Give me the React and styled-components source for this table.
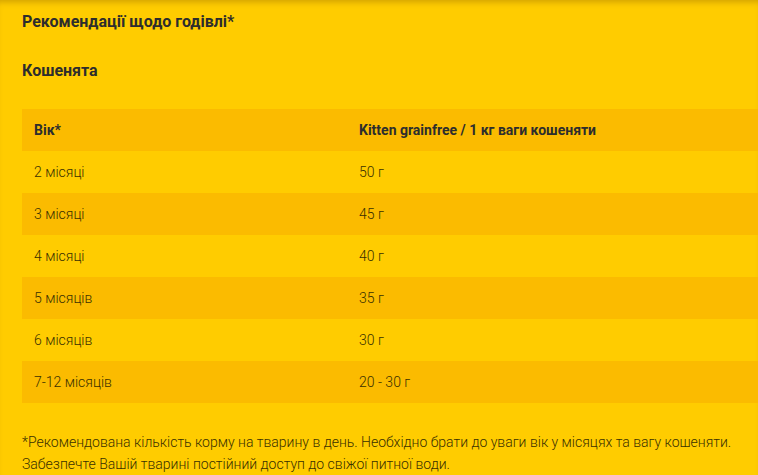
import React from 'react'
import styled, { createGlobalStyle } from 'styled-components'

const GlobalStyle = createGlobalStyle`
  html, body {
    margin: 0;
    padding: 0;
    background: #ffcc00;
  }
  body {
    font-family: Roboto, "Noto Sans", sans-serif;
    color: #2d2d2d;
  }
`

const Page = styled.div`
  width: 758px;
  height: 475px;
  overflow: hidden;
  background: #ffcc00;
  box-shadow: inset 0 6px 6px -4px rgba(120, 80, 0, 0.35);
  padding: 11px 0 0 22px;
  box-sizing: border-box;
`

const Title = styled.h2`
  margin: 0;
  font-size: 16px;
  font-weight: 700;
  line-height: 22px;
  color: #2d2d2d;
`

const Subtitle = styled.h3`
  margin: 27px 0 0;
  font-size: 16px;
  font-weight: 700;
  line-height: 22px;
  color: #2d2d2d;
`

const Table = styled.div`
  margin-top: 27px;
  width: 760px;
  display: flex;
  flex-direction: column;
`

const Row = styled.div`
  display: grid;
  grid-template-columns: 325px 1fr;
  height: 42px;
  align-items: center;
  padding-left: 12px;
  background: ${p => (p.$shaded ? '#fbbb00' : 'transparent')};
  font-size: 14px;
  font-weight: ${p => (p.$head ? 700 : 300)};
  color: ${p => (p.$head ? '#2d2d2d' : '#3a3000')};
`

const Note = styled.p`
  margin: 28px 0 0;
  font-size: 14px;
  font-weight: 300;
  line-height: 22px;
  color: #3a3000;
`

const rows = [
  ['2 місяці', '50 г'],
  ['3 місяці', '45 г'],
  ['4 місяці', '40 г'],
  ['5 місяців', '35 г'],
  ['6 місяців', '30 г'],
  ['7-12 місяців', '20 - 30 г'],
]

const App = () => {
  return (
    <Page>
      <GlobalStyle />
      <Title>Рекомендації щодо годівлі*</Title>
      <Subtitle>Кошенята</Subtitle>
      <Table>
        <Row $head $shaded>
          <span>Вік*</span>
          <span>Kitten grainfree / 1 кг ваги кошеняти</span>
        </Row>
        {rows.map(([age, amount], i) => (
          <Row key={age} $shaded={i % 2 === 1}>
            <span>{age}</span>
            <span>{amount}</span>
          </Row>
        ))}
      </Table>
      <Note>
        *Рекомендована кількість корму на тварину в день. Необхідно брати до уваги вік у місяцях та вагу кошеняти.
        <br />
        Забезпечте Вашій тварині постійний доступ до свіжої питної води.
      </Note>
    </Page>
  )
}

export default App
